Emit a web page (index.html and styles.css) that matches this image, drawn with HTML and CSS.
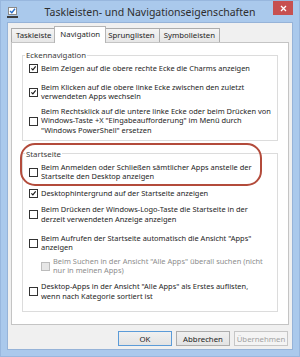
FILE: index.html
```html
<!DOCTYPE html>
<html lang="de">
<head>
    <meta charset="UTF-8">
    <title>Taskleisten- und Navigationseigenschaften</title>
    <link rel="stylesheet" href="styles.css">
</head>
<body>
<div class="window">
    <div class="titlebar">
        <svg class="app-icon" viewBox="0 0 11 11" width="11" height="11">
            <rect x="1.5" y="0.5" width="8" height="7" fill="#fff" stroke="#8a8a8a"/>
            <path d="M3 4 L4.8 5.8 L8 1.8" fill="none" stroke="#2a6fc9" stroke-width="1.4"/>
            <rect x="0" y="9" width="11" height="2" fill="#3d3d3d"/>
        </svg>
        <div class="title">Taskleisten- und Navigationseigenschaften</div>
        <div class="close">
            <svg viewBox="0 0 7 7" width="7" height="7">
                <path d="M1 1 L6 6 M6 1 L1 6" stroke="#fff" stroke-width="1.3"/>
            </svg>
        </div>
    </div>

    <div class="client">
        <div class="tabs">
            <div class="tab">Taskleiste</div>
            <div class="tab active">Navigation</div>
            <div class="tab">Sprunglisten</div>
            <div class="tab">Symbolleisten</div>
        </div>

        <div class="panel">
            <fieldset class="group">
                <legend>Eckennavigation</legend>
                <label class="option">
                    <span class="box checked"><svg viewBox="0 0 9 9"><path d="M1.8 4.4 L3.7 6.4 L7.3 1.8"/></svg></span>
                    <span class="text">Beim Zeigen auf die obere rechte Ecke die Charms anzeigen</span>
                </label>
                <label class="option down">
                    <span class="box checked"><svg viewBox="0 0 9 9"><path d="M1.8 4.4 L3.7 6.4 L7.3 1.8"/></svg></span>
                    <span class="text">Beim Klicken auf die obere linke Ecke zwischen den zuletzt<br>verwendeten Apps wechseln</span>
                </label>
                <label class="option up">
                    <span class="box"></span>
                    <span class="text">Beim Rechtsklick auf die untere linke Ecke oder beim Drücken von<br>Windows-Taste +X "Eingabeaufforderung" im Menü durch<br>"Windows PowerShell" ersetzen</span>
                </label>
            </fieldset>

            <fieldset class="group start">
                <legend>Startseite</legend>
                <label class="option">
                    <span class="box"></span>
                    <span class="text">Beim Anmelden oder Schließen sämtlicher Apps anstelle der<br>Startseite den Desktop anzeigen</span>
                </label>
                <label class="option">
                    <span class="box checked"><svg viewBox="0 0 9 9"><path d="M1.8 4.4 L3.7 6.4 L7.3 1.8"/></svg></span>
                    <span class="text">Desktophintergrund auf der Startseite anzeigen</span>
                </label>
                <label class="option">
                    <span class="box"></span>
                    <span class="text">Beim Drücken der Windows-Logo-Taste die Startseite in der<br>derzeit verwendeten Anzeige anzeigen</span>
                </label>
                <label class="option down">
                    <span class="box"></span>
                    <span class="text">Beim Aufrufen der Startseite automatisch die Ansicht "Apps"<br>anzeigen</span>
                </label>
                <label class="option sub disabled">
                    <span class="box"></span>
                    <span class="text">Beim Suchen in der Ansicht "Alle Apps" überall suchen (nicht<br>nur in meinen Apps)</span>
                </label>
                <label class="option up-small">
                    <span class="box"></span>
                    <span class="text">Desktop-Apps in der Ansicht "Alle Apps" als Erstes auflisten,<br>wenn nach Kategorie sortiert ist</span>
                </label>
            </fieldset>

            <div class="highlight"></div>
        </div>

        <div class="buttons">
            <button class="default">OK</button>
            <button>Abbrechen</button>
            <button disabled>Übernehmen</button>
        </div>
    </div>
</div>
</body>
</html>
```

FILE: styles.css
```css
body { margin: 0; width: 300px; height: 357px; overflow: hidden; font-family: "Segoe UI", "Noto Sans", sans-serif; color: #1e1e1e; }
.window { width: 300px; height: 357px; box-sizing: border-box; background: #aac9ec; border: 1px solid #98b7de; display: flex; flex-direction: column; }

/* title bar */
.titlebar { height: 21px; display: grid; grid-template-columns: 1fr auto 1fr; align-items: start; }
.app-icon { margin: 6px 0 0 6px; }
.title { font-size: 10.5px; line-height: 20px; padding-top: 1px; color: #2e2e2e; white-space: nowrap; }
.close { justify-self: end; width: 20px; height: 14px; margin-right: 6px; background: #c75050; display: flex; align-items: center; justify-content: center; }

/* client area */
.client { flex: 1; margin: 0 6px 6px; background: #f0f0f0; border: 1px solid #96b3d8; padding: 3px 3px 0; display: flex; flex-direction: column; }

.tabs { display: flex; align-items: flex-end; height: 17px; margin-bottom: -1px; position: relative; z-index: 1; font-size: 7.8px; }
.tab { height: 14px; box-sizing: border-box; margin-bottom: 1px; padding: 0 4px; line-height: 12px; border: 1px solid #acacac; border-bottom: none; background: linear-gradient(#f4f4f4, #e6e6e6); white-space: nowrap; }
.tab + .tab { margin-left: -1px; }
.tab.active { height: 17px; margin: 0 -2px; padding: 0 5px; line-height: 14px; background: #fff; border-color: #b5b5b5; position: relative; z-index: 1; }

.panel { height: 283px; box-sizing: border-box; background: #fff; border: 1px solid #c4c4c4; padding: 7px 10px 0; position: relative; font-size: 7.45px; }

.group { margin: 0; min-width: 0; padding: 4px 0 4px 6px; border: 1px solid #dcdcdc; display: flex; flex-direction: column; }
.group.start { margin-top: 8px; padding-bottom: 10px; }
.group legend { margin-left: -4px; padding: 0 1px; font-size: 7.8px; line-height: 10px; color: #3a3a3a; }

.option { display: flex; align-items: center; gap: 3px; }
.option + .option { margin-top: 7px; }
.option + .option.down { margin-top: 9px; }
.option + .option.up { margin-top: 5px; }
.option + .option.sub { margin-top: 4px; margin-left: 12px; }
.option + .option.up-small { margin-top: 6px; }
.text { line-height: 9.6px; white-space: nowrap; }

.box { flex: none; width: 9px; height: 9px; box-sizing: border-box; border: 1px solid #333; background: #fff; }
.box svg { display: block; width: 7px; height: 7px; }
.box svg path { fill: none; stroke: #1a1a1a; stroke-width: 1.5; }
.disabled .box { border-color: #bcbcbc; background: #e6e6e6; }
.disabled .text { color: #8d8d8d; }

/* red marker drawn over the dialog */
.highlight { position: absolute; left: 8px; top: 100px; width: 242px; height: 43px; box-sizing: border-box; border: 2px solid #b34b3b; border-radius: 15px; }

/* buttons */
.buttons { display: flex; justify-content: flex-end; gap: 4px; margin-top: 6px; padding-right: 1px; }
button { width: 54px; height: 15px; padding: 0; font-family: inherit; font-size: 7.8px; color: #1e1e1e; background: linear-gradient(#f0f0f0, #e3e3e3); border: 1px solid #adadad; }
button.default { border-color: #5b9bd8; }
button:disabled { color: #a3a3a3; background: #f4f4f4; border-color: #c6c6c6; }
```
